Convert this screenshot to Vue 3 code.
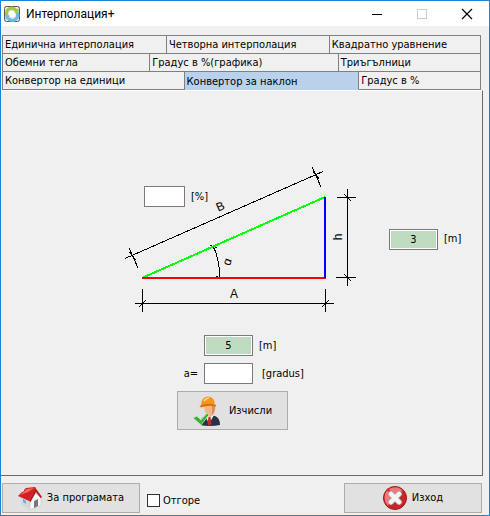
<script setup>
import { ref } from 'vue'

const tabRows = [
  [
    { name: 'Единична интерполация', size: 164 },
    { name: 'Четворна интерполация', size: 163 },
    { name: 'Квадратно уравнение', size: 151 }
  ],
  [
    { name: 'Обемни тегла', size: 147 },
    { name: 'Градус в %(графика)', size: 189 },
    { name: 'Триъгълници', size: 142 }
  ],
  [
    { name: 'Конвертор на единици', size: 182 },
    { name: 'Конвертор за наклон', size: 175 },
    { name: 'Градус в %', size: 121 }
  ]
]

const active = ref('Конвертор за наклон')
const base = ref('5')
const height = ref('3')
const percent = ref('')
const angle = ref('')
const onTop = ref(false)

function calculate() {
  const slope = Number(height.value) / Number(base.value)
  percent.value = (slope * 100).toFixed(1)
  angle.value = ((Math.atan(slope) * 180) / Math.PI).toFixed(2)
}
</script>

<template>
  <div class="window">
    <header class="titlebar">
      <svg class="app-icon" viewBox="0 0 16 16" aria-hidden="true">
        <rect x="0.5" y="0.5" width="15" height="15" rx="2" fill="#e9eef0" stroke="#555" />
        <path d="M3 9.5A5.2 5.2 0 0 1 12 4.4" fill="none" stroke="#9fca3c" stroke-width="3.4" />
        <path d="M13 6.5A5.2 5.2 0 0 1 4 11.8" fill="none" stroke="#6db9e2" stroke-width="3.4" />
        <path d="M9.5 6.5l5 .4V2z" fill="#9fca3c" />
        <path d="M6.5 9.5l-5-.4V14z" fill="#6db9e2" />
        <circle cx="8" cy="8" r="3" fill="#fff" />
      </svg>
      <h1 class="title">Интерполация+</h1>
      <div class="controls">
        <button type="button" class="control" aria-label="Минимизиране">
          <svg viewBox="0 0 12 12"><path d="M1 6.5h10" stroke="#000" /></svg>
        </button>
        <button type="button" class="control" aria-label="Максимизиране" disabled>
          <svg viewBox="0 0 12 12"><rect x="1.5" y="1.5" width="9" height="9" fill="none" stroke="#ccc" /></svg>
        </button>
        <button type="button" class="control" aria-label="Затваряне">
          <svg viewBox="0 0 12 12"><path d="M1 1l10 10M11 1L1 11" stroke="#000" stroke-width="1.2" /></svg>
        </button>
      </div>
    </header>

    <nav class="tabs" role="tablist">
      <div v-for="(row, i) in tabRows" :key="i" class="tab-row">
        <button
          v-for="tab in row"
          :key="tab.name"
          type="button"
          role="tab"
          class="tab"
          :class="{ selected: tab.name === active }"
          :aria-selected="tab.name === active"
          :style="{ flexGrow: tab.size }"
          @click="active = tab.name"
        >{{ tab.name }}</button>
      </div>
    </nav>

    <main class="page">
      <div class="figure-row">
        <div class="figure">
          <svg class="drawing" viewBox="120 160 245 158" role="img" aria-label="Наклон">
            <g stroke="#000" fill="none" shape-rendering="crispEdges">
              <path d="M125 258.5L323 171.5M129 248L138 268M312 167L321 187M129 252L136 260M313 171L319 179" />
              <path d="M135 303.5H334M142.5 289V312M325.5 289V312M139 307L146 300M322 307L329 300" />
              <path d="M347.5 189V286M337 197.5H356M336 277.5H356M344 194L351 201M344 274L351 281" />
              <path d="M213 246Q220 260 219.5 278M210 245L217 248M213 246L215 251M216 276L222 279M219 271V278" />
            </g>
            <g stroke-width="2" fill="none" shape-rendering="crispEdges">
              <path d="M142 278L325 197" stroke="#0f0" />
              <path d="M142 278H326" stroke="#f00" />
              <path d="M325 197V278" stroke="#00f" />
            </g>
            <g class="marks">
              <text x="234" y="298" text-anchor="middle">A</text>
              <text transform="translate(222 210) rotate(-24)" text-anchor="middle">B</text>
              <text transform="translate(231 263) rotate(-70)" text-anchor="middle">ɑ</text>
              <text transform="translate(342 237) rotate(-90)" text-anchor="middle">h</text>
            </g>
          </svg>
          <label class="percent">
            <input v-model="percent" class="field small" type="text" />
            <span>[%]</span>
          </label>
        </div>
        <label class="height">
          <input v-model="height" class="field filled" type="text" />
          <span>[m]</span>
        </label>
      </div>

      <div class="form">
        <label class="form-row">
          <span class="lead"></span>
          <input v-model="base" class="field filled" type="text" />
          <span>[m]</span>
        </label>
        <label class="form-row">
          <span class="lead">a=</span>
          <input v-model="angle" class="field" type="text" />
          <span class="unit">[gradus]</span>
        </label>
        <button type="button" class="button calc" @click="calculate">
          <svg class="worker" viewBox="0 0 28 30" aria-hidden="true">
            <path d="M7 29q0-8 6-9l4-1 5 1q5 2 5 9-10 2-20 0z" fill="#263145" />
            <path d="M12 19l4 9 5-9z" fill="#f4f4f4" />
            <path d="M15.5 21h2l1 7-2 2-2-2z" fill="#c22a22" />
            <path d="M11 9h11q1 7-2 10-3 4-6 0-3-4-3-10z" fill="#efb786" />
            <path d="M19 10h3q0 6-3 9z" fill="#d78d58" />
            <path d="M8 9Q8 1 15 .5 22 1 22 9q-7-2-14 1z" fill="#f7941e" />
            <path d="M6.5 10Q14 6 23 9v1.5q-8-2-15 1z" fill="#d9700b" />
            <path d="M11 5q2-3 5-3" stroke="#ffd08a" stroke-width="1.5" fill="none" />
            <path d="M0 22l4-2 4 4 6-7 2 2-8 10z" fill="#35b234" stroke="#c8f0bd" stroke-width=".8" />
          </svg>
          Изчисли
        </button>
      </div>
    </main>

    <footer class="bottom">
      <button type="button" class="button">
        <svg class="house" viewBox="0 0 24 24" aria-hidden="true">
          <path d="M3 11l9 5v8l-9-5z" fill="#d8d8d8" />
          <path d="M12 15l6-8 5 5v7l-11 5z" fill="#f7f7f7" stroke="#bbb" stroke-width=".5" />
          <path d="M0 10L8 2l9-1 1 1-7 13z" fill="#d42022" />
          <path d="M2 9l7-6 7-1-6 4z" fill="#f46b64" />
          <path d="M11 15l6.5-13L24 11l-1.5 1-4.5-6-5.5 10z" fill="#b51618" />
          <path d="M16 15l4-2v7l-4 2z" fill="#777" />
          <path d="M5 13l3 2v3l-3-2z" fill="#59b4da" />
          <path d="M4 2l2-1v4L4 6z" fill="#e8e8e8" />
        </svg>
        За програмата
      </button>
      <label class="on-top">
        <input v-model="onTop" type="checkbox" />
        <span>Отгоре</span>
      </label>
      <button type="button" class="button exit">
        <svg class="cross" viewBox="0 0 24 24" aria-hidden="true">
          <circle cx="12" cy="12" r="11.5" fill="#c9262b" stroke="#9c1518" />
          <path d="M1.5 12A10.5 10.5 0 0 1 20 5Q9 7 5 20 1.5 16 1.5 12z" fill="#ec7a78" />
          <path d="M4 3l8 7" stroke="#d52c30" stroke-width="2" />
          <path d="M8 8l8 8M16 8l-8 8" stroke="#a9a9a9" stroke-width="6" stroke-linecap="round" />
          <path d="M8 8l8 8M16 8l-8 8" stroke="#f4f4f4" stroke-width="4.5" stroke-linecap="round" />
        </svg>
        Изход
      </button>
    </footer>
  </div>
</template>

<style>
body {
  margin: 0;
}
</style>

<style scoped>
.window {
  box-sizing: border-box;
  display: flex;
  flex-direction: column;
  min-height: 100vh;
  border: 1px solid #1883d7;
  background: #f0f0f0;
  color: #000;
  font-family: "DejaVu Sans Condensed", "Noto Sans", sans-serif;
  font-size: 11px;
  line-height: 14px;
}

button,
input {
  font: inherit;
  color: inherit;
}

.titlebar {
  display: flex;
  align-items: center;
  height: 25px;
  padding-left: 3px;
  background: #fff;
}

.app-icon {
  width: 16px;
  height: 16px;
}

.title {
  flex: 1;
  margin: 0 0 0 6px;
  font-family: Roboto, "Open Sans", sans-serif;
  font-size: 12px;
  font-weight: 400;
  line-height: 16px;
}

.controls {
  display: flex;
}

.control {
  display: flex;
  align-items: center;
  justify-content: center;
  width: 45px;
  height: 24px;
  padding: 0;
  border: 0;
  background: none;
}

.control svg {
  width: 12px;
  height: 12px;
}

.tabs {
  margin: 9px 8px 0 1px;
  border-top: 1px solid #808080;
}

.tab-row {
  display: flex;
  height: 18px;
  border-left: 1px solid #808080;
}

.tab {
  box-sizing: border-box;
  flex: 1 1 0;
  min-width: 0;
  padding: 0 0 0 2px;
  border: solid #808080;
  border-width: 0 1px 1px 0;
  background: #f0f0f0;
  text-align: left;
  white-space: nowrap;
  line-height: 14px;
}

.tab.selected {
  padding-top: 3px;
  border-bottom-color: #b9d1ea;
  background: #b9d1ea;
}

.page {
  flex: 1;
  margin-right: 6px;
  padding: 69px 0 0 119px;
  border: solid #696969;
  border-width: 0 1px 1px 0;
  border-top: 1px solid #fff;
}

.figure-row {
  display: flex;
  align-items: center;
  gap: 24px;
}

.figure {
  position: relative;
  width: 245px;
  height: 158px;
}

.drawing {
  display: block;
  width: 100%;
  height: 100%;
}

.marks {
  font-family: "Liberation Sans", "DejaVu Sans", sans-serif;
  font-size: 12px;
}

.percent {
  position: absolute;
  left: 24px;
  top: 26px;
  display: flex;
  align-items: center;
  gap: 6px;
}

.height {
  display: flex;
  align-items: center;
  gap: 6px;
}

.field {
  box-sizing: border-box;
  width: 49px;
  height: 21px;
  padding: 1px;
  border: 1px solid #7a7a7a;
  border-radius: 0;
  background: #fff;
  text-align: center;
}

.field.small {
  width: 41px;
}

.field.filled {
  background: #c0dcc0;
  box-shadow: inset 0 0 0 1px #fff;
}

.form {
  display: flex;
  flex-direction: column;
  align-items: flex-start;
  gap: 7px;
  padding: 17px 0 14px 57px;
}

.form-row {
  display: flex;
  align-items: center;
  gap: 6px;
}

.lead {
  width: 21px;
  text-align: right;
}

.unit {
  padding-left: 3px;
}

.button {
  box-sizing: border-box;
  display: flex;
  align-items: center;
  justify-content: center;
  gap: 5px;
  width: 138px;
  height: 30px;
  padding: 0;
  border: 1px solid #adadad;
  background: #e1e1e1;
}

.calc {
  width: 111px;
  height: 39px;
  gap: 8px;
}

.worker {
  width: 28px;
  height: 30px;
}

.house,
.cross {
  width: 24px;
  height: 24px;
}

.bottom {
  display: flex;
  align-items: center;
  padding: 7px 7px 2px 1px;
}

.on-top {
  display: flex;
  align-items: center;
  gap: 3px;
  margin: 5px 0 0 7px;
}

.on-top input {
  appearance: none;
  width: 13px;
  height: 13px;
  margin: 0;
  border: 1px solid #333;
  background: #fff;
}

.on-top input:checked {
  box-shadow: inset 0 0 0 2px #fff;
  background: #333;
}

.exit {
  margin-left: auto;
}
</style>
